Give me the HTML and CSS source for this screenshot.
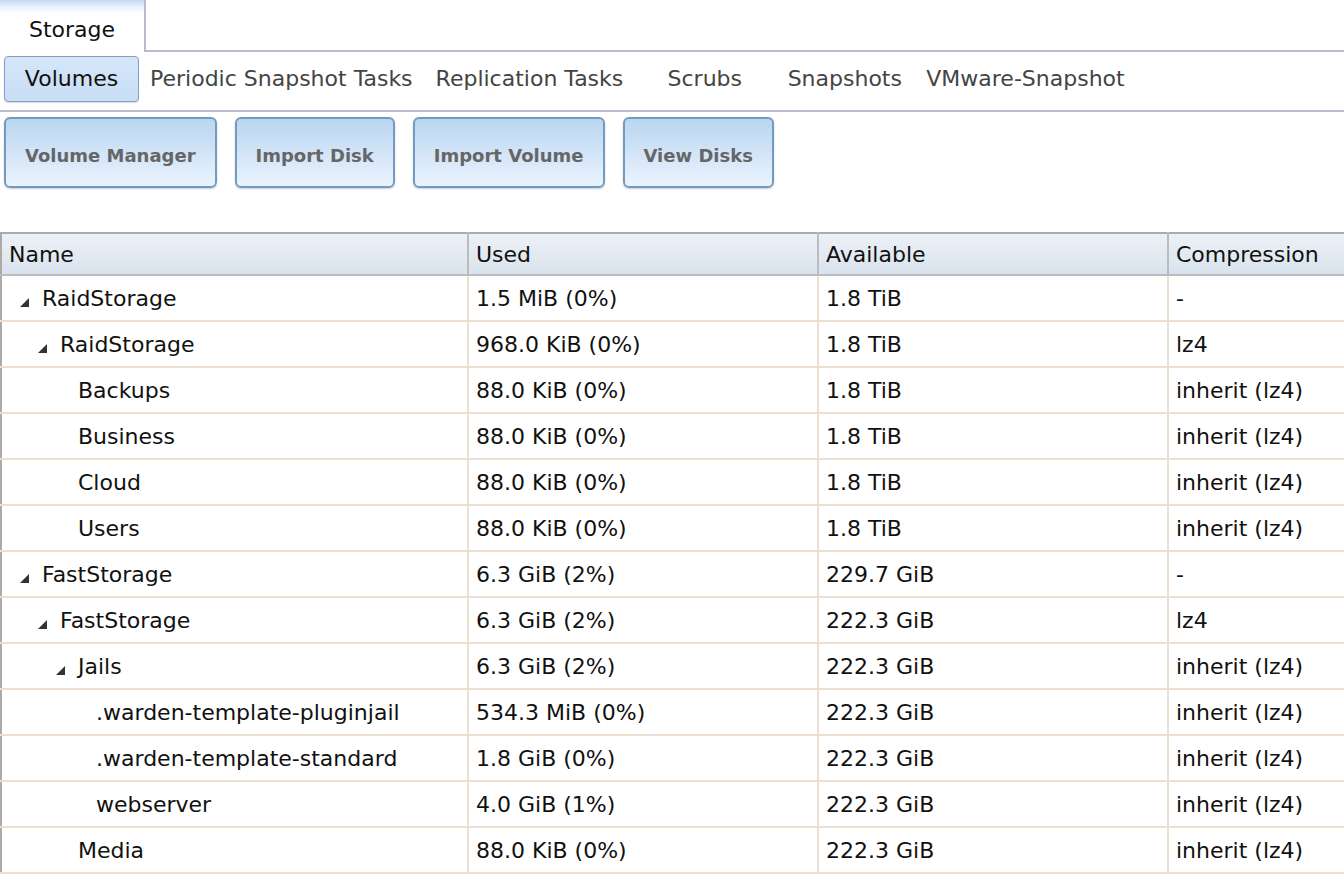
FILE: index.html
```html
<!DOCTYPE html>
<html lang="en">
<head>
    <meta charset="UTF-8">
    <title>Storage</title>
    <link rel="stylesheet" href="styles.css">
</head>
<body>
    <div class="tabbar">
        <div class="maintab">Storage</div>
        <div class="tabfill"></div>
    </div>
    <div class="subtabs">
        <span class="subtab active">Volumes</span>
        <span class="subtab">Periodic Snapshot Tasks</span>
        <span class="subtab">Replication Tasks</span>
        <span class="subtab">Scrubs</span>
        <span class="subtab">Snapshots</span>
        <span class="subtab">VMware-Snapshot</span>
    </div>
    <div class="actions">
        <button class="btn">Volume Manager</button>
        <button class="btn">Import Disk</button>
        <button class="btn">Import Volume</button>
        <button class="btn">View Disks</button>
    </div>
    <div class="grid">
        <table>
            <thead>
                <tr>
                    <th class="c_name">Name</th>
                    <th class="c_used">Used</th>
                    <th class="c_avail">Available</th>
                    <th class="c_comp">Compression</th>
                </tr>
            </thead>
            <tbody>
                <tr>
                    <td><span class="lv0"><i class="tw open"><svg width="9" height="9" viewBox="0 0 9 9"><polygon points="9,0 9,9 0,9"/></svg></i>RaidStorage</span></td>
                    <td>1.5 MiB (0%)</td><td>1.8 TiB</td><td>-</td>
                </tr>
                <tr>
                    <td><span class="lv1"><i class="tw open"><svg width="9" height="9" viewBox="0 0 9 9"><polygon points="9,0 9,9 0,9"/></svg></i>RaidStorage</span></td>
                    <td>968.0 KiB (0%)</td><td>1.8 TiB</td><td>lz4</td>
                </tr>
                <tr>
                    <td><span class="lv2"><i class="tw"></i>Backups</span></td>
                    <td>88.0 KiB (0%)</td><td>1.8 TiB</td><td>inherit (lz4)</td>
                </tr>
                <tr>
                    <td><span class="lv2"><i class="tw"></i>Business</span></td>
                    <td>88.0 KiB (0%)</td><td>1.8 TiB</td><td>inherit (lz4)</td>
                </tr>
                <tr>
                    <td><span class="lv2"><i class="tw"></i>Cloud</span></td>
                    <td>88.0 KiB (0%)</td><td>1.8 TiB</td><td>inherit (lz4)</td>
                </tr>
                <tr>
                    <td><span class="lv2"><i class="tw"></i>Users</span></td>
                    <td>88.0 KiB (0%)</td><td>1.8 TiB</td><td>inherit (lz4)</td>
                </tr>
                <tr>
                    <td><span class="lv0"><i class="tw open"><svg width="9" height="9" viewBox="0 0 9 9"><polygon points="9,0 9,9 0,9"/></svg></i>FastStorage</span></td>
                    <td>6.3 GiB (2%)</td><td>229.7 GiB</td><td>-</td>
                </tr>
                <tr>
                    <td><span class="lv1"><i class="tw open"><svg width="9" height="9" viewBox="0 0 9 9"><polygon points="9,0 9,9 0,9"/></svg></i>FastStorage</span></td>
                    <td>6.3 GiB (2%)</td><td>222.3 GiB</td><td>lz4</td>
                </tr>
                <tr>
                    <td><span class="lv2"><i class="tw open"><svg width="9" height="9" viewBox="0 0 9 9"><polygon points="9,0 9,9 0,9"/></svg></i>Jails</span></td>
                    <td>6.3 GiB (2%)</td><td>222.3 GiB</td><td>inherit (lz4)</td>
                </tr>
                <tr>
                    <td><span class="lv3"><i class="tw"></i>.warden-template-pluginjail</span></td>
                    <td>534.3 MiB (0%)</td><td>222.3 GiB</td><td>inherit (lz4)</td>
                </tr>
                <tr>
                    <td><span class="lv3"><i class="tw"></i>.warden-template-standard</span></td>
                    <td>1.8 GiB (0%)</td><td>222.3 GiB</td><td>inherit (lz4)</td>
                </tr>
                <tr>
                    <td><span class="lv3"><i class="tw"></i>webserver</span></td>
                    <td>4.0 GiB (1%)</td><td>222.3 GiB</td><td>inherit (lz4)</td>
                </tr>
                <tr>
                    <td><span class="lv2"><i class="tw"></i>Media</span></td>
                    <td>88.0 KiB (0%)</td><td>222.3 GiB</td><td>inherit (lz4)</td>
                </tr>
            </tbody>
        </table>
    </div>
</body>
</html>
```

FILE: styles.css
```css
*{
    margin: 0;
    padding: 0;
    box-sizing: border-box;
}
body{
    font-family: "DejaVu Sans", Verdana, sans-serif;
    font-size: 22px;
    color: #111;
    background: #fff;
    overflow: hidden;
}
/* top tab strip */
.tabbar{
    display: flex;
    height: 52px;
}
.maintab{
    width: 146px;
    height: 52px;
    border-right: 2px solid #b9bcca;
    background: linear-gradient(#c6daf3 0, #eef4fc 8px, #fff 14px);
    text-align: center;
    line-height: 60px;
}
.tabfill{
    flex: 1;
    height: 52px;
    border-bottom: 2px solid #b9bcca;
}
/* volumes / snapshots / ... */
.subtabs{
    display: flex;
    align-items: flex-start;
    height: 60px;
    padding: 4px 0 0 4px;
    border-bottom: 2px solid #b9bcca;
}
.subtab{
    min-width: 135px;
    height: 46px;
    padding: 0 8px;
    margin-right: 5px;
    border: 1px solid transparent;
    border-radius: 4px;
    line-height: 44px;
    text-align: center;
    color: #444;
    white-space: nowrap;
}
.subtab.active{
    margin-right: 2px;
    background: linear-gradient(#d5e6f8, #c8def5);
    border-color: #7ea1c5;
    color: #111;
    box-shadow: 0 1px 1px rgba(0,0,0,.15);
}
/* action buttons */
.actions{
    display: flex;
    padding: 5px 0 0 4px;
    height: 120px;
}
.btn{
    height: 71px;
    padding: 5px 19px 0;
    margin-right: 18px;
    border: 2px solid #739bc2;
    border-radius: 6px;
    background: linear-gradient(#bad6f0, #dceafa 70%, #eaf3fd);
    box-shadow: 0 1px 2px rgba(0,0,0,.2);
    font-family: "DejaVu Sans", Verdana, sans-serif;
    font-size: 18px;
    font-weight: bold;
    color: #666;
}
/* dataset tree grid */
.grid{
    width: 1520px;
}
table{
    width: 100%;
    border-collapse: collapse;
    border-top: 2px solid #ababab;
    border-left: 2px solid #ababab;
    table-layout: fixed;
}
th{
    height: 42px;
    padding: 0 7px;
    text-align: left;
    font-weight: normal;
    background: linear-gradient(#edf1f6, #d9e3ed);
    border-right: 2px solid #bcbcbc;
    border-bottom: 2px solid #bcbcbc;
}
.c_name{ width: 467px; }
.c_used{ width: 350px; }
.c_avail{ width: 350px; }
td{
    height: 46px;
    padding: 0 7px;
    border-right: 2px solid #eddfd0;
    border-bottom: 2px solid #eddfd0;
    white-space: nowrap;
}
.tw{
    display: inline-block;
    width: 22px;
    font-style: normal;
}
.tw svg{
    vertical-align: -1px;
}
.tw polygon{
    fill: #333;
}
.lv0{ padding-left: 11px; }
.lv1{ padding-left: 29px; }
.lv2{ padding-left: 47px; }
.lv3{ padding-left: 65px; }
```
